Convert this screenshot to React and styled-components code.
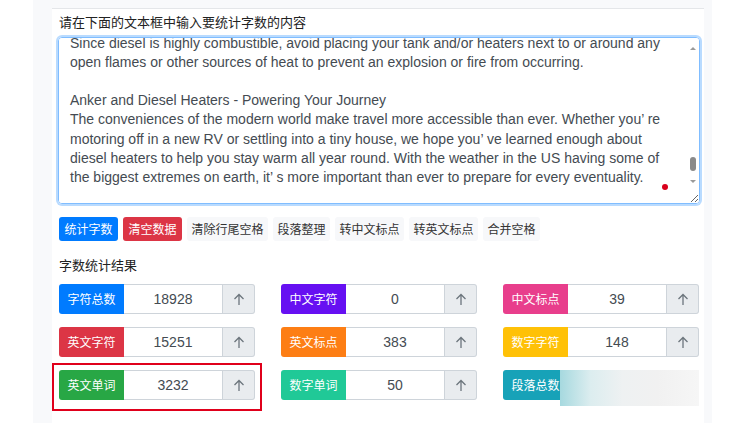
import React, { useLayoutEffect, useRef } from 'react'
import styled, { createGlobalStyle } from 'styled-components'

const GlobalStyle = createGlobalStyle`
  * {
    box-sizing: border-box;
    margin: 0;
    padding: 0;
  }
  body {
    background: #ffffff;
    font-family: "Noto Sans CJK SC", "Liberation Sans", sans-serif;
    color: #212529;
  }
`

const Frame = styled.div`
  margin-left: 33px;
  width: 679px;
  height: 423px;
  background: #f8f9fb;
  padding: 0 8px 0 19px;
  overflow: hidden;
`

const Card = styled.div`
  margin-top: 8px;
  height: 415px;
  background: #fff;
  border-top: 1px solid #e4e6e9;
  padding: 4px 4px 0 6px;
  display: flex;
  flex-direction: column;
`

const Caption = styled.div`
  font-size: 13px;
  line-height: 18px;
  color: #222;
  padding-left: 1px;
  margin-top: ${p => p.$gap || 0}px;
`

const EditorWrap = styled.div`
  position: relative;
  margin-top: 6px;
  height: 167px;
`

const Editor = styled.textarea`
  display: block;
  width: 642px;
  height: 167px;
  border: 1px solid #80bdff;
  border-radius: 4px;
  box-shadow: 0 0 0 2px rgba(128, 189, 255, 0.55);
  padding: 6px 28px 6px 11px;
  font-family: "Liberation Sans", "Noto Sans CJK SC", sans-serif;
  font-size: 14px;
  line-height: 19.2px;
  color: #444b52;
  outline: none;
  resize: vertical;
  overflow-y: scroll;
  scrollbar-width: none;
  white-space: pre;
  &::-webkit-scrollbar { display: none; }
`

const FakeBar = styled.div`
  position: absolute;
  top: 8px;
  right: 2px;
  width: 10px;
  height: 140px;
  display: flex;
  flex-direction: column;
  align-items: center;
  pointer-events: none;
`

const Thumb = styled.div`
  margin: auto 0 8px;
  width: 6px;
  height: 14px;
  border-radius: 3px;
  background: #8a8a8a;
`

const Dot = styled.div`
  position: absolute;
  left: 604px;
  top: 147px;
  width: 6px;
  height: 6px;
  border-radius: 50%;
  background: #d9001b;
`

const Toolbar = styled.div`
  display: flex;
  gap: 5px;
  margin: 13px 0 0 1px;
`

const ToolButton = styled.button`
  height: 24px;
  padding: 0 ${p => (p.$tone === 'light' ? 4.5 : 5.5)}px;
  border: none;
  border-radius: 3px;
  font-family: "Noto Sans CJK SC", sans-serif;
  font-size: 12px;
  line-height: 24px;
  color: ${p => (p.$tone === 'light' ? '#333' : '#fff')};
  background: ${p => p.$tone === 'blue' ? '#007bff' : p.$tone === 'red' ? '#dc3545' : '#f7f8fa'};
`

const Results = styled.div`
  display: grid;
  grid-template-columns: repeat(3, 196px);
  justify-content: space-between;
  row-gap: 13px;
  width: 640px;
  margin: 10px 0 0 1px;
`

const Stat = styled.div`
  position: relative;
  display: flex;
  height: 30px;
`

const StatLabel = styled.div`
  width: 65px;
  flex: none;
  background: ${p => p.$color};
  color: #fff;
  font-size: 12px;
  line-height: 30px;
  text-align: center;
  border-radius: 3px 0 0 3px;
`

const StatValue = styled.div`
  flex: 1;
  border: 1px solid #ced4da;
  border-left: none;
  font-family: "Liberation Sans", sans-serif;
  font-size: 14px;
  line-height: 28px;
  color: #444b52;
  text-align: center;
`

const StatButton = styled.div`
  width: 32px;
  flex: none;
  display: flex;
  align-items: center;
  justify-content: center;
  background: #e9ecef;
  border: 1px solid #ced4da;
  border-left: none;
  border-radius: 0 3px 3px 0;
`

const Highlight = styled.div`
  position: absolute;
  inset: -7px -7px -11px -7px;
  border: 2px solid #e0001b;
  pointer-events: none;
`

const Watermark = styled.div`
  position: absolute;
  inset: 0 0 -6px 57px;
  background: linear-gradient(90deg, #a6d9df 0%, #dcedef 22%, #eef1f2 45%, #f1f1f1 70%, #f6f6f6 100%);
`

const Triangle = ({ up }) => (
  <svg width="10" height="6" viewBox="0 0 10 6">
    <path d={up ? 'M2 5 L5 2 L8 5 Z' : 'M2 1 L5 4 L8 1 Z'} fill="#9a9a9a" />
  </svg>
)

const ArrowUp = () => (
  <svg width="12" height="13" viewBox="0 0 12 13">
    <path d="M1.5 6 L6 1.5 L10.5 6 M6 1.5 V12" fill="none" stroke="#6c757d" strokeWidth="1.3" />
  </svg>
)

const text = [
  'When using a diesel heater, make sure the exhaust is vented outside and that the fuel',
  'line is properly secured. Check the unit regularly for leaks or signs of wear and keep',
  'a carbon monoxide detector in the space where the heater is installed.',
  'Since diesel is highly combustible, avoid placing your tank and/or heaters next to or around any',
  'open flames or other sources of heat to prevent an explosion or fire from occurring.',
  '',
  'Anker and Diesel Heaters - Powering Your Journey',
  'The conveniences of the modern world make travel more accessible than ever. Whether you\u2019 re',
  'motoring off in a new RV or settling into a tiny house, we hope you\u2019 ve learned enough about',
  'diesel heaters to help you stay warm all year round. With the weather in the US having some of',
  'the biggest extremes on earth, it\u2019 s more important than ever to prepare for every eventuality.',
  '',
].join('\n')

const tools = [
  ['统计字数', 'blue'],
  ['清空数据', 'red'],
  ['清除行尾空格', 'light'],
  ['段落整理', 'light'],
  ['转中文标点', 'light'],
  ['转英文标点', 'light'],
  ['合并空格', 'light'],
]

const stats = [
  { label: '字符总数', value: '18928', color: '#007bff' },
  { label: '中文字符', value: '0', color: '#6610f2' },
  { label: '中文标点', value: '39', color: '#e83e8c' },
  { label: '英文字符', value: '15251', color: '#dc3545' },
  { label: '英文标点', value: '383', color: '#fd7e14' },
  { label: '数字字符', value: '148', color: '#ffc107' },
  { label: '英文单词', value: '3232', color: '#28a745', marked: true },
  { label: '数字单词', value: '50', color: '#20c997' },
  { label: '段落总数', value: '52', color: '#17a2b8', covered: true },
]

export default function App() {
  const editor = useRef(null)

  useLayoutEffect(() => {
    if (editor.current) editor.current.scrollTop = 68
  }, [])

  return (
    <Frame>
      <GlobalStyle />
      <Card>
        <Caption>请在下面的文本框中输入要统计字数的内容</Caption>
        <EditorWrap>
          <Editor ref={editor} defaultValue={text} spellCheck={false} />
          <FakeBar>
            <Triangle up />
            <Thumb />
            <Triangle />
          </FakeBar>
          <Dot />
        </EditorWrap>
        <Toolbar>
          {tools.map(([name, tone]) => (
            <ToolButton key={name} $tone={tone}>{name}</ToolButton>
          ))}
        </Toolbar>
        <Caption $gap={15}>字数统计结果</Caption>
        <Results>
          {stats.map(s => (
            <Stat key={s.label}>
              <StatLabel $color={s.color}>{s.label}</StatLabel>
              <StatValue>{s.value}</StatValue>
              <StatButton><ArrowUp /></StatButton>
              {s.marked && <Highlight />}
              {s.covered && <Watermark />}
            </Stat>
          ))}
        </Results>
      </Card>
    </Frame>
  )
}
